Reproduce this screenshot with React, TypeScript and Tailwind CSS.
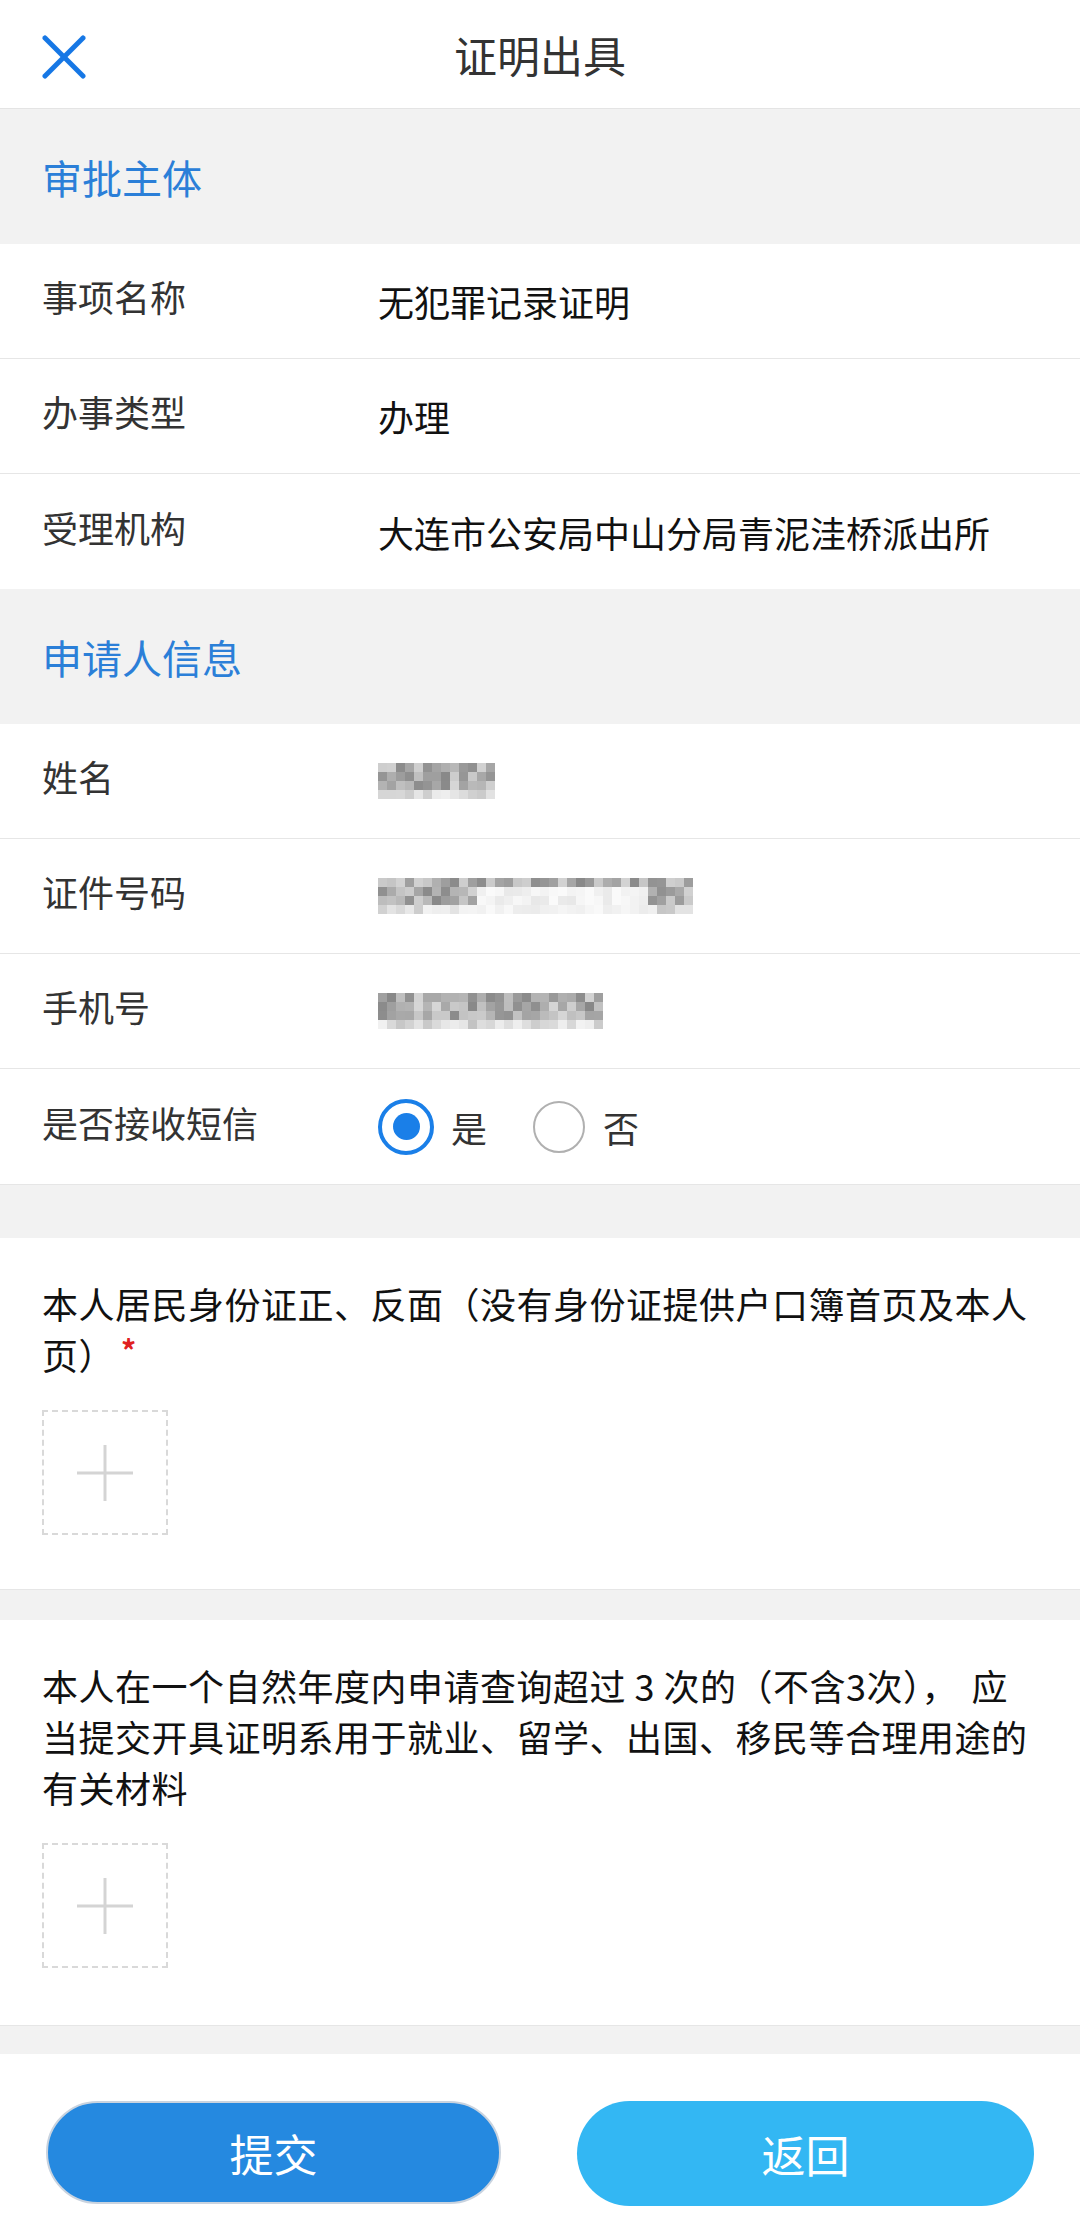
import React from 'react';

const FONT = "font-['Noto_Sans_CJK_SC','Noto_Sans',sans-serif]";

// 打码块（模糊后的个人信息）
function Mosaic({ cols, seed, gapCols = [] as number[] }: { cols: number; seed: number; gapCols?: number[] }) {
  const cell = 9;
  const rows = 4;
  let s = seed;
  const rand = () => {
    s = (s * 9301 + 49297) % 233280;
    return s / 233280;
  };
  const rects: React.ReactNode[] = [];
  for (let r = 0; r < rows; r++) {
    for (let c = 0; c < cols; c++) {
      let v = 135 + Math.floor(rand() * 80);
      if (r === rows - 1) v = 195 + Math.floor(rand() * 50);
      if (gapCols.includes(c) && r > 0) v = 232 + Math.floor(rand() * 20);
      const g = Math.min(v, 250);
      rects.push(
        <rect key={`${r}-${c}`} x={c * cell} y={r * cell} width={cell} height={cell} fill={`rgb(${g},${g},${g})`} />
      );
    }
  }
  return (
    <svg width={cols * cell} height={rows * cell} viewBox={`0 0 ${cols * cell} ${rows * cell}`} shapeRendering="crispEdges">
      {rects}
    </svg>
  );
}

function SectionTitle({ title }: { title: string }) {
  return (
    <div className="h-[135px] bg-[#f2f2f2] flex items-center px-[42px]">
      <span className="text-[40px] text-[#2b7fd8]">{title}</span>
    </div>
  );
}

function Row({ label, children, last }: { label: string; children: React.ReactNode; last?: boolean }) {
  return (
    <div className={`h-[115px] bg-white flex items-center ${last ? '' : 'border-b border-[#e6e6e6]'}`}>
      <div className="w-[378px] pl-[42px] mb-[10px] text-[36px] text-[#333]">{label}</div>
      <div className="flex-1 text-[36px] text-[#111]">{children}</div>
    </div>
  );
}

function UploadBox() {
  return (
    <div className="w-[126px] h-[125px] border-2 border-dashed border-[#d9d9d9] flex items-center justify-center">
      <svg width="56" height="56" viewBox="0 0 56 56">
        <line x1="0" y1="28" x2="56" y2="28" stroke="#d4d4d4" strokeWidth="3" />
        <line x1="28" y1="0" x2="28" y2="56" stroke="#d4d4d4" strokeWidth="3" />
      </svg>
    </div>
  );
}

export default function App() {
  return (
    <div className={`w-full min-h-screen bg-white ${FONT}`}>
      {/* Header */}
      <div className="relative h-[109px] bg-white border-b border-[#e4e4e4] flex items-center justify-center">
        <button className="absolute left-[42px] top-[35px]">
          <svg width="44" height="44" viewBox="0 0 44 44">
            <line x1="3" y1="3" x2="41" y2="41" stroke="#1677e5" strokeWidth="5" strokeLinecap="round" />
            <line x1="41" y1="3" x2="3" y2="41" stroke="#1677e5" strokeWidth="5" strokeLinecap="round" />
          </svg>
        </button>
        <h1 className="text-[43px] text-[#333] font-normal">证明出具</h1>
      </div>

      <SectionTitle title="审批主体" />
      <Row label="事项名称">无犯罪记录证明</Row>
      <Row label="办事类型">办理</Row>
      <Row label="受理机构" last>大连市公安局中山分局青泥洼桥派出所</Row>

      <SectionTitle title="申请人信息" />
      <Row label="姓名">
        <div className="flex items-center h-[40px]"><Mosaic cols={13} seed={17} /></div>
      </Row>
      <Row label="证件号码">
        <div className="flex items-center h-[40px]">
          <Mosaic cols={35} seed={91} gapCols={[11, 12, 13, 14, 15, 16, 17, 18, 19, 20, 21, 22, 23, 24, 25, 26, 27, 28, 29]} />
        </div>
      </Row>
      <Row label="手机号">
        <div className="flex items-center h-[40px]"><Mosaic cols={25} seed={53} /></div>
      </Row>
      <Row label="是否接收短信" last>
        <div className="flex items-center">
          <label className="flex items-center">
            <span className="w-[56px] h-[56px] rounded-full border-[4px] border-[#1a7fe8] flex items-center justify-center">
              <span className="w-[27px] h-[27px] rounded-full bg-[#1a7fe8]" />
            </span>
            <span className="ml-[17px] text-[36px] text-[#333]">是</span>
          </label>
          <label className="flex items-center ml-[46px]">
            <span className="w-[52px] h-[52px] rounded-full border-2 border-[#b0b0b0]" />
            <span className="ml-[18px] text-[36px] text-[#333]">否</span>
          </label>
        </div>
      </Row>

      <div className="h-[54px] bg-[#f2f2f2] border-t border-[#e6e6e6]" />

      {/* Upload 1 */}
      <div className="bg-white px-[42px] pt-[40px] pb-[54px] border-b border-[#e6e6e6]">
        <p className="text-[36px] leading-[51px] text-[#111] tracking-[0.5px]">
          本人居民身份证正、反面（没有身份证提供户口簿首页及本人
          <br />
          页）<span className="relative -top-[8px] ml-[6px] text-[30px] leading-none font-bold text-[#e02020]">*</span>
        </p>
        <div className="mt-[30px]">
          <UploadBox />
        </div>
      </div>

      <div className="h-[30px] bg-[#f2f2f2]" />

      {/* Upload 2 */}
      <div className="bg-white px-[42px] pt-[40px] pb-[57px] border-b border-[#e6e6e6]">
        <p className="text-[36px] leading-[51px] text-[#111] tracking-[0.5px]">
          本人在一个自然年度内申请查询超过 3 次的（不含3次）<span className="tracking-[14px]">，</span>应
          <br />
          当提交开具证明系用于就业、留学、出国、移民等合理用途的
          <br />
          有关材料
        </p>
        <div className="mt-[30px]">
          <UploadBox />
        </div>
      </div>

      <div className="h-[28px] bg-[#f2f2f2]" />

      {/* Buttons */}
      <div className="bg-white px-[46px] pt-[47px] pb-[9px] flex justify-between">
        <button className="w-[455px] h-[103px] rounded-full bg-[#2589e0] border-2 border-[#c9d3df] text-white text-[44px]">
          提交
        </button>
        <button className="w-[457px] h-[105px] rounded-full bg-[#33b7f3] text-white text-[44px]">
          返回
        </button>
      </div>
    </div>
  );
}
